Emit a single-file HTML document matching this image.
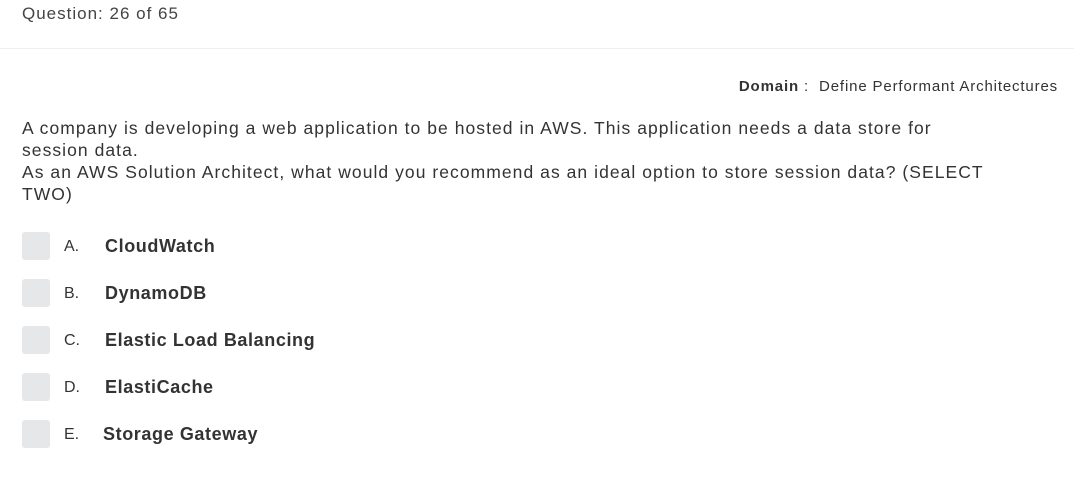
<!DOCTYPE html>
<html><head><style>
body{margin:0;width:1074px;height:481px;background:#fff;font-family:"Liberation Sans",sans-serif;color:#333;position:relative;overflow:hidden}
.hdr{position:absolute;left:22px;top:4px;font-size:17px;letter-spacing:1px;color:#444}
.div{position:absolute;left:0;right:0;top:48px;border-top:1px solid #eeeeee}
.dom{position:absolute;right:16px;top:78px;font-size:15px;letter-spacing:0.85px;color:#333;white-space:nowrap}
.dom b{font-weight:bold}
.q{position:absolute;left:22px;top:117px;font-size:17.5px;letter-spacing:1.05px;line-height:22px;color:#333;white-space:nowrap}
.opt{position:absolute;left:22px;height:28px;font-size:17px}
.cb{width:28px;height:28px;background:#e6e7e9;border-radius:3px}
.l{position:absolute;left:42px;top:6px;font-size:16px}
.t{position:absolute;left:83px;top:4px;font-weight:bold;white-space:nowrap;color:#333;font-size:18px;letter-spacing:0.6px}
</style></head><body>
<div class="hdr">Question: 26 of 65</div>
<div class="div"></div>
<div class="dom"><b>Domain</b> :&nbsp; Define Performant Architectures</div>
<div class="q">A company is developing a web application to be hosted in AWS. This application needs a data store for<br>session data.<br>As an AWS Solution Architect, what would you recommend as an ideal option to store session data? (SELECT<br>TWO)</div>
<div class="opt" style="top:232px"><div class="cb"></div><span class="l">A.</span><span class="t">CloudWatch</span></div>
<div class="opt" style="top:279px"><div class="cb"></div><span class="l">B.</span><span class="t">DynamoDB</span></div>
<div class="opt" style="top:326px"><div class="cb"></div><span class="l">C.</span><span class="t">Elastic Load Balancing</span></div>
<div class="opt" style="top:373px"><div class="cb"></div><span class="l">D.</span><span class="t">ElastiCache</span></div>
<div class="opt" style="top:420px"><div class="cb"></div><span class="l">E.</span><span class="t" style="left:81px">Storage Gateway</span></div>
</body></html>
